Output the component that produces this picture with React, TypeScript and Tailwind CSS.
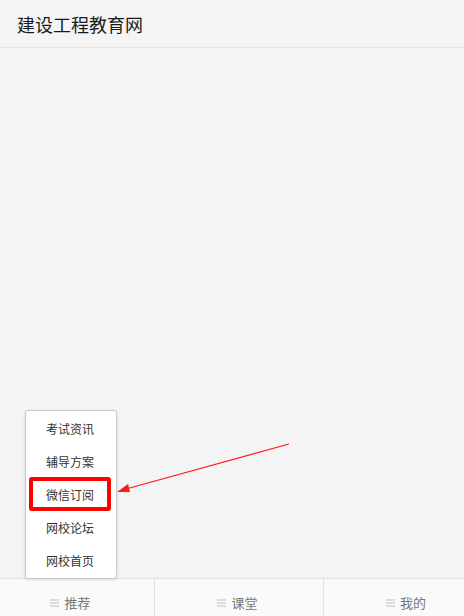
const menuItems = ['考试资讯', '辅导方案', '微信订阅', '网校论坛', '网校首页']

function MenuIcon() {
  return (
    <svg width="9" height="8" viewBox="0 0 9 8" className="shrink-0">
      <path d="M0 1h9M0 4h9M0 7h9" stroke="#bdbdbd" strokeWidth="1" />
    </svg>
  )
}

export default function App() {
  return (
    <div
      className="relative flex h-[616px] w-[464px] flex-col overflow-hidden bg-[#f4f4f4] text-[#222]"
      style={{ fontFamily: '"Noto Sans CJK SC", "Noto Sans", sans-serif' }}
    >
      <header className="flex h-[48px] shrink-0 items-center border-b border-[#e3e3e3] pl-[17px]">
        <h1 className="text-[18px] leading-none font-normal text-[#1a1a1a]">建设工程教育网</h1>
      </header>

      <main className="relative flex-1">
        <div className="absolute left-[25px] top-[362px] w-[92px] rounded-[3px] border border-[#c9c9c9] bg-white py-[1px] shadow-[0_1px_3px_rgba(0,0,0,0.12)]">
          {menuItems.map((item) => (
            <div key={item} className="flex h-[33px] items-center pl-[20px] text-[12px] text-[#333]">
              {item}
            </div>
          ))}
          <div className="absolute left-[3px] top-[66px] h-[34px] w-[82px] rounded-[3px] border-[4px] border-[#ff0000]" />
        </div>
      </main>

      <nav className="flex h-[38px] shrink-0 border-t border-[#e2e2e2] bg-[#fafafa] text-[13px] text-[#777]">
        <div className="flex w-[155px] items-center justify-center gap-[5px] border-r border-[#e2e2e2] pt-[10px] pr-[13px]">
          <MenuIcon />
          <span>推荐</span>
        </div>
        <div className="flex w-[169px] items-center justify-center gap-[5px] border-r border-[#e2e2e2] pt-[10px] pr-[3px]">
          <MenuIcon />
          <span>课堂</span>
        </div>
        <div className="flex flex-1 items-center justify-center gap-[5px] pt-[10px] pl-[24px]">
          <MenuIcon />
          <span>我的</span>
        </div>
      </nav>

      <svg className="pointer-events-none absolute left-0 top-0" width="464" height="616">
        <line x1="289" y1="444" x2="126" y2="489" stroke="#ff1a1a" strokeWidth="1.2" />
        <polygon points="117,492 128,484 130,492" fill="#ff1a1a" />
      </svg>
    </div>
  )
}
